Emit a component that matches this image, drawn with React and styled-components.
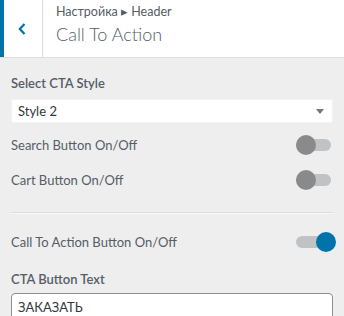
import React from "react";
import styled, { createGlobalStyle } from "styled-components";

const Global = createGlobalStyle`
  html, body { margin: 0; padding: 0; background: #eeeeee; }
  body { font-family: Lato, "Open Sans", sans-serif; color: #555d66; }
  * { box-sizing: border-box; }
`;

const Panel = styled.div`
  width: 344px;
  height: 316px;
  overflow: hidden;
  background: #eeeeee;
`;

const Header = styled.div`
  display: flex;
  height: 58px;
  background: #fff;
  border-bottom: 1px solid #dddddd;
`;

const Back = styled.button`
  width: 43px;
  flex: none;
  border: none;
  border-left: 4px solid #0073aa;
  border-right: 1px solid #dddddd;
  background: #fff;
  display: flex;
  align-items: center;
  justify-content: center;
  padding: 0 2px 0 0;
  color: #0073aa;
`;

const Titles = styled.div`
  display: flex;
  flex-direction: column;
  padding: 3px 0 0 13px;
`;

const Crumb = styled.span`
  font-size: 12.5px;
  line-height: 17px;
  color: #555d66;
`;

const Title = styled.h3`
  margin: 0;
  font-size: 18px;
  font-weight: 300;
  line-height: 28px;
  color: #555d66;
`;

const Body = styled.div`
  display: flex;
  flex-direction: column;
  padding: 15px 11px 0 11px;
`;

const Label = styled.div`
  font-size: 13px;
  font-weight: 600;
  line-height: 20px;
  color: #555d66;
  margin-top: ${(p) => p.$mt || 0}px;
  margin-bottom: ${(p) => p.$mb || 0}px;
`;

const Select = styled.div`
  height: 24px;
  background: #fff;
  display: flex;
  align-items: center;
  justify-content: space-between;
  padding: 0 8px 0 6px;
  font-size: 13px;
  color: #32373c;
  border: 1px solid #f3f3f3;
`;

const Caret = styled.span`
  width: 0;
  height: 0;
  border-left: 4px solid transparent;
  border-right: 4px solid transparent;
  border-top: 5px solid #777;
`;

const Row = styled.div`
  display: flex;
  align-items: center;
  justify-content: space-between;
  height: 35px;
  margin-top: ${(p) => p.$mt || 0}px;
  padding-right: 2px;
`;

const RowLabel = styled.span`
  font-size: 13px;
  line-height: 20px;
  color: #555d66;
`;

const Track = styled.span`
  position: relative;
  width: 35px;
  height: 12px;
  border-radius: 6px;
  background: #bfc3c6;
  display: block;
`;

const Knob = styled.span`
  position: absolute;
  top: -4px;
  left: ${(p) => (p.$on ? 20 : 0)}px;
  width: 20px;
  height: 20px;
  border-radius: 50%;
  background: ${(p) => (p.$on ? "#0073aa" : "#8a8a8a")};
`;

const Divider = styled.hr`
  margin: 15px 0 10px 0;
  border: none;
  border-top: 1px solid #dcdcdc;
  border-bottom: 1px solid #fafafa;
`;

const Input = styled.div`
  height: 30px;
  background: #fff;
  border: 1px solid #8c8f94;
  border-radius: 4px;
  padding: 5px 6px;
  font-size: 13px;
  color: #32373c;
  margin-top: 4px;
`;

const Toggle = ({ on }) => (
  <Track $on={on}>
    <Knob $on={on} />
  </Track>
);

export default function App() {
  return (
    <Panel>
      <Global />
      <Header>
        <Back aria-label="Back">
          <svg width="10" height="14" viewBox="0 0 10 14">
            <path d="M7.5 2 L2.8 7 L7.5 12" fill="none" stroke="#0073aa" strokeWidth="2.2" />
          </svg>
        </Back>
        <Titles>
          <Crumb>Настройка ▸ Header</Crumb>
          <Title>Call To Action</Title>
        </Titles>
      </Header>
      <Body>
        <Label $mb={6}>Select CTA Style</Label>
        <Select>
          <span>Style 2</span>
          <Caret />
        </Select>
        <Row $mt={4}>
          <RowLabel>Search Button On/Off</RowLabel>
          <Toggle />
        </Row>
        <Row>
          <RowLabel>Cart Button On/Off</RowLabel>
          <Toggle />
        </Row>
        <Divider />
        <Row>
          <RowLabel>Call To Action Button On/Off</RowLabel>
          <Toggle on />
        </Row>
        <Label $mt={10}>CTA Button Text</Label>
        <Input>ЗАКАЗАТЬ</Input>
      </Body>
    </Panel>
  );
}
